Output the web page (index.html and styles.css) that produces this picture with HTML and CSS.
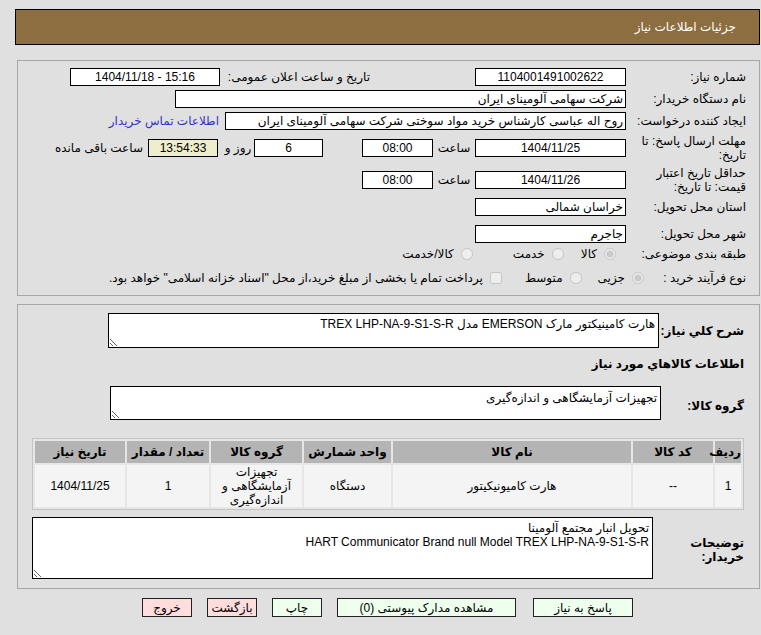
FILE: index.html
```html
<!DOCTYPE html>
<html lang="fa" dir="rtl">
<head>
  <meta charset="UTF-8">
  <title>جزئیات اطلاعات نیاز</title>
  <link rel="stylesheet" href="styles.css">
</head>
<body>
  <div class="page">
    <div class="title-bar">جزئیات اطلاعات نیاز</div>

    <div class="panel info">
      <div class="row">
        <div class="lbl">شماره نیاز:</div>
        <div class="field c w151">1104001491002622</div>
        <div class="pub-lbl">تاریخ و ساعت اعلان عمومی:</div>
        <div class="field c w150" dir="ltr">1404/11/18 - 15:16</div>
      </div>
      <div class="row g4">
        <div class="lbl">نام دستگاه خریدار:</div>
        <div class="field w451">شرکت سهامی آلومینای ایران</div>
      </div>
      <div class="row g4">
        <div class="lbl">ایجاد کننده درخواست:</div>
        <div class="field w401">روح اله عباسی کارشناس خرید مواد سوختی شرکت سهامی آلومینای ایران</div>
        <a class="contact" href="#">اطلاعات تماس خریدار</a>
      </div>
      <div class="row g9">
        <div class="lbl">مهلت ارسال پاسخ: تا تاریخ:</div>
        <div class="field c w151">1404/11/25</div>
        <div class="unit w42">ساعت</div>
        <div class="field c w71">08:00</div>
        <div class="field c w69 days">6</div>
        <div class="unit w36">روز و</div>
        <div class="field c w70 remain">13:54:33</div>
        <div class="left-txt">ساعت باقی مانده</div>
      </div>
      <div class="row g14">
        <div class="lbl">حداقل تاریخ اعتبار قیمت: تا تاریخ:</div>
        <div class="field c w151">1404/11/26</div>
        <div class="unit w42">ساعت</div>
        <div class="field c w71">08:00</div>
      </div>
      <div class="row g9">
        <div class="lbl">استان محل تحویل:</div>
        <div class="field w151">خراسان شمالی</div>
      </div>
      <div class="row g9">
        <div class="lbl">شهر محل تحویل:</div>
        <div class="field w151">جاجرم</div>
      </div>
      <div class="row g2">
        <div class="lbl">طبقه بندی موضوعی:</div>
        <label class="opt first"><input type="radio" name="cat" checked disabled><span>کالا</span></label>
        <label class="opt o2"><input type="radio" name="cat" disabled><span>خدمت</span></label>
        <label class="opt o3"><input type="radio" name="cat" disabled><span>کالا/خدمت</span></label>
      </div>
      <div class="row g6">
        <div class="lbl narrow">نوع فرآیند خرید :</div>
        <label class="opt"><input type="radio" name="proc" checked disabled><span>جزیی</span></label>
        <label class="opt o4"><input type="radio" name="proc" disabled><span>متوسط</span></label>
        <label class="opt o5"><input type="checkbox" disabled><span>پرداخت تمام یا بخشی از مبلغ خرید،از محل "اسناد خزانه اسلامی" خواهد بود.</span></label>
      </div>
    </div>

    <div class="panel goods">
      <div class="brow">
        <div class="blbl">شرح کلي نياز:</div>
        <textarea class="area a1" readonly>هارت کامینیکتور مارک EMERSON مدل TREX LHP-NA-9-S1-S-R</textarea>
      </div>
      <div class="section-title">اطلاعات کالاهاي مورد نياز</div>
      <div class="brow">
        <div class="blbl low">گروه کالا:</div>
        <textarea class="area a2" readonly>تجهیزات آزمایشگاهی و اندازه‌گیری</textarea>
      </div>
      <table class="items">
        <thead>
          <tr>
            <th class="c-row">ردیف</th>
            <th class="c-code">کد کالا</th>
            <th class="c-name">نام کالا</th>
            <th class="c-unit">واحد شمارش</th>
            <th class="c-group">گروه کالا</th>
            <th class="c-qty">تعداد / مقدار</th>
            <th class="c-date">تاریخ نیاز</th>
          </tr>
        </thead>
        <tbody>
          <tr>
            <td>1</td>
            <td>--</td>
            <td>هارت کامیونیکیتور</td>
            <td>دستگاه</td>
            <td>تجهیزات آزمایشگاهی و اندازه‌گیری</td>
            <td>1</td>
            <td>1404/11/25</td>
          </tr>
        </tbody>
      </table>
      <div class="brow notes">
        <div class="blbl">توضیحات خریدار:</div>
        <textarea class="area a3" readonly>تحویل انبار مجتمع آلومینا
HART Communicator Brand null Model TREX LHP-NA-9-S1-S-R</textarea>
      </div>
    </div>

    <div class="actions">
      <button class="btn ok b-answer">پاسخ به نیاز</button>
      <button class="btn ok b-docs">مشاهده مدارک پیوستی (0)</button>
      <button class="btn ok b-print">چاپ</button>
      <button class="btn no">بازگشت</button>
      <button class="btn no">خروج</button>
    </div>
  </div>
</body>
</html>
```

FILE: styles.css
```css
html, body { margin: 0; }
body { background: #e0e0e0; color: #000; font-family: "Liberation Sans", "DejaVu Sans", sans-serif; font-size: 12px; }
.page { padding: 9px 1px 0 15px; }

.title-bar { height: 34px; line-height: 34px; border: 1px solid #000; background: #8d6e41; color: #fff; padding-right: 23px; }

.panel { border: 1px solid #a6a6a6; margin-left: 2px; }
.info { margin-top: 15px; height: 218px; padding: 7px 13px 9px 0; }
.goods { margin-top: 8px; height: 275px; padding: 8px 15px 0 0; }

/* form rows */
.row { display: flex; align-items: center; height: 18px; }
.g2 { margin-top: 2px; }
.g4 { margin-top: 4px; }
.g6 { margin-top: 6px; }
.g9 { margin-top: 9px; }
.g14 { margin-top: 14px; }
.lbl { width: 120px; flex: none; line-height: 14px; }
.lbl.narrow { width: 102px; }
.field { box-sizing: border-box; flex: none; height: 18px; line-height: 16px; border: 1px solid #000; background: #fff; padding: 0 2px; white-space: nowrap; overflow: hidden; }
.field.c { text-align: center; }
.w69 { width: 69px; }
.w70 { width: 70px; }
.w71 { width: 71px; }
.w150 { width: 150px; }
.w151 { width: 151px; }
.w401 { width: 401px; }
.w451 { width: 451px; }
.pub-lbl { width: 150px; margin-right: 105px; flex: none; }
.contact { color: #3333cc; text-decoration: none; margin-right: 6px; }
.unit { flex: none; text-align: center; }
.w42 { width: 42px; }
.w36 { width: 36px; padding-left: 4px; box-sizing: border-box; }
.days { margin-right: 39px; }
.remain { background: #eeeecc; }
.left-txt { margin-right: 5px; }

.opt { display: flex; align-items: center; flex: none; }
.opt input { margin: 0 0 0 7px; width: 12px; height: 12px; }
.opt.first { margin-right: 10px; }
.o2 { margin-right: 17px; }
.o3 { margin-right: 40px; }
.o4 { margin-right: 16px; }
.o5 { margin-right: 23px; }

/* goods panel */
.brow { display: flex; align-items: center; }
.blbl { width: 85px; flex: none; font-weight: bold; font-size: 12px; line-height: 14px; white-space: nowrap; }
.blbl.low { padding-top: 6px; }
.area { box-sizing: border-box; border: 1px solid #000; background: #fff; font-family: inherit; font-size: 12px; padding: 3px 3px 2px; margin: 0; direction: rtl; }
.a1 { width: 551px; height: 35px; }
.a2 { width: 551px; height: 34px; margin-right: -2px; padding-top: 4px; }
.section-title { font-weight: bold; font-size: 12px; margin: 8px 0 0; line-height: 14px; height: 29px; padding-top: 1px; }

.items { margin: 18px 0 0 15px; border: 1px solid #c4c4c4; background: #e6e6e6; border-spacing: 2px; width: 712px; table-layout: fixed; }
.items th { background: #b4b4b4; font-weight: bold; height: 22px; padding: 0; font-size: 12px; }
.items td { background: #f4f4f4; text-align: center; height: 41px; padding: 0 3px; line-height: 14px; }
.c-row { width: 26px; }
.c-code { width: 80px; }
.c-name { width: 238px; }
.c-unit { width: 87px; }
.c-group { width: 91px; }
.c-qty { width: 82px; }
.c-date { width: 90px; }

.notes { margin-top: 7px; }
.notes .blbl { width: 91px; padding-top: 4px; white-space: normal; }
.a3 { width: 621px; height: 62px; resize: vertical; }

.actions { display: flex; padding: 9px 127px 0 0; }
.btn { box-sizing: border-box; height: 19px; border: 1px solid #222; font-family: inherit; font-size: 12px; padding: 0; color: #000; flex: none; margin-right: 15px; }
.ok { background: #eeffee; }
.no { background: #ffdddd; width: 50px; }
.b-answer { width: 100px; margin-right: 0; }
.b-docs { width: 179px; margin-right: 17px; }
.b-print { width: 50px; }
```
